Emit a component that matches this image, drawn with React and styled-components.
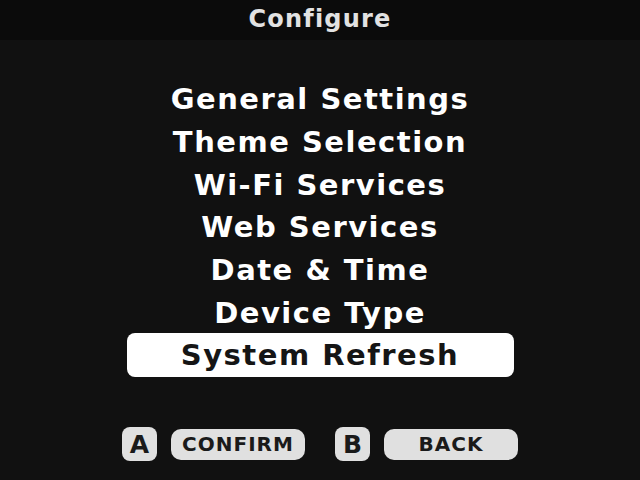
import React from "react";
import styled, { createGlobalStyle } from "styled-components";

const GlobalStyle = createGlobalStyle`
  html, body {
    margin: 0;
    padding: 0;
    background: #111111;
    font-family: "DejaVu Sans", "Noto Sans", sans-serif;
  }
`;

const items = [
  "General Settings",
  "Theme Selection",
  "Wi-Fi Services",
  "Web Services",
  "Date & Time",
  "Device Type",
  "System Refresh",
];

const App = () => (
  <>
    <GlobalStyle />
    <Screen>
      <Header>Configure</Header>
      <Menu>
        {items.map((label, i) => (
          <MenuItem key={label} selected={i === items.length - 1}>
            {label}
          </MenuItem>
        ))}
      </Menu>
      <Footer>
        <Control>
          <KeyBadge>A</KeyBadge>
          <ActionPill>CONFIRM</ActionPill>
        </Control>
        <Control>
          <KeyBadge>B</KeyBadge>
          <ActionPill>BACK</ActionPill>
        </Control>
      </Footer>
    </Screen>
  </>
);

export default App;

const Screen = styled.div`
  width: 640px;
  height: 480px;
  display: flex;
  flex-direction: column;
  background: #111111;
  overflow: hidden;
`;

const Header = styled.div`
  height: 40px;
  background: #0b0b0b;
  color: #e2e2e2;
  font-size: 24px;
  font-weight: 700;
  letter-spacing: 1.2px;
  display: flex;
  align-items: center;
  justify-content: center;
  padding-bottom: 3px;
  box-sizing: border-box;
`;

const Menu = styled.div`
  display: flex;
  flex-direction: column;
  align-items: center;
  padding-top: 38px;
`;

const MenuItem = styled.div`
  width: 387px;
  height: ${(p) => (p.selected ? "44px" : "42.7px")};
  margin-top: ${(p) => (p.selected ? "-1px" : "0")};
  border-radius: 8px;
  display: flex;
  align-items: center;
  justify-content: center;
  font-size: 29px;
  font-weight: 700;
  letter-spacing: 1.5px;
  color: ${(p) => (p.selected ? "#151515" : "#ffffff")};
  background: ${(p) => (p.selected ? "#ffffff" : "transparent")};
`;

const Footer = styled.div`
  margin-top: auto;
  margin-bottom: 19px;
  display: flex;
  justify-content: center;
  gap: 30px;
`;

const Control = styled.div`
  display: flex;
  align-items: center;
  gap: 14px;
`;

const KeyBadge = styled.div`
  width: 35px;
  height: 34px;
  border-radius: 8px;
  background: #e0e0e0;
  color: #1a1a1a;
  font-size: 25px;
  font-weight: 700;
  display: flex;
  align-items: center;
  justify-content: center;
`;

const ActionPill = styled.div`
  width: 134px;
  height: 31px;
  border-radius: 10px;
  background: #e0e0e0;
  color: #1a1a1a;
  font-size: 20px;
  font-weight: 700;
  letter-spacing: 1px;
  display: flex;
  align-items: center;
  justify-content: center;
`;
